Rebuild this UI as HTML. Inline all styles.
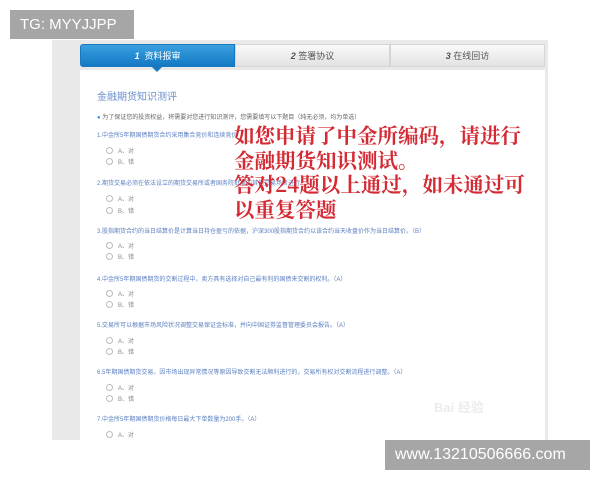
<!DOCTYPE html>
<html><head><meta charset="utf-8"><style>
*{margin:0;padding:0;box-sizing:border-box}
body{width:600px;height:480px;background:#fff;position:relative;overflow:hidden;font-family:"Liberation Sans","Noto Sans CJK SC",sans-serif}
.panel{position:absolute;left:52px;top:40px;width:496px;height:400px;background:#e9e9e9}
.white{position:absolute;left:80px;top:70px;width:465px;height:370px;background:#fff}
.tab{position:absolute;top:44px;height:23px;font-size:9px;line-height:23px;text-align:center;color:#555;background:linear-gradient(#fafafa,#e2e2e2);border:1px solid #d5d5d5}
.t1{left:80px;width:155px;background:linear-gradient(#3aa0e0,#1379c4);color:#fff;border-color:#1a78c0;border-radius:3px 0 0 3px}
.arrow{position:absolute;left:152px;top:67px;border:5px solid transparent;border-top-color:#1a78c0}
.t{position:absolute;left:97px;font-size:6px;color:#5b7fc0;white-space:nowrap}
.o{position:absolute;left:106px;font-size:6px;color:#888;white-space:nowrap}
.o:before{content:"";display:inline-block;width:5px;height:5px;border:1px solid #bbb;border-radius:50%;margin-right:5px;vertical-align:-1px}
.red{position:absolute;left:234px;top:122px;font-family:"Noto Serif CJK SC",serif;font-size:20.5px;line-height:24.5px;color:#d42a34;font-weight:bold;white-space:nowrap}
.lab{position:absolute;background:#a6a6a6;color:#fff;font-size:15px;line-height:29px;padding:0 10px}
</style></head><body>
<div class="lab" style="left:10px;top:10px;width:124px;height:29px">TG: MYYJJPP</div>
<div class="panel"></div>
<div class="white"></div>
<div class="tab t1"><i><b>1</b></i>&nbsp; 资料报审</div>
<div class="tab" style="left:235px;width:155px"><i><b>2</b></i> 签署协议</div>
<div class="tab" style="left:390px;width:155px"><i><b>3</b></i> 在线回访</div>
<div class="arrow"></div>
<div class="t" style="top:88px;font-size:10px;color:#6a8fcc">金融期货知识测评</div>
<div class="t" style="top:112px;color:#666"><span style="color:#3a8fd8">●</span> 为了保证您的投资权益，将需要对您进行知识测评，您需要填写以下题目（纯无必须，均为单选）</div>
<div class="t" style="top:130px">1.中金所5年期国债期货合约采用集合竞价和连续竞价</div>
<div class="o" style="top:146px">A、对</div><div class="o" style="top:157px">B、错</div>
<div class="t" style="top:178px">2.期货交易必须在依法设立的期货交易所或者国务院批准的其他交易场所进行</div>
<div class="o" style="top:194px">A、对</div><div class="o" style="top:206px">B、错</div>
<div class="t" style="top:226px">3.股指期货合约的当日结算价是计算当日持仓盈亏的依据，沪深300股指期货合约以该合约当天收盘价作为当日结算价。（B）</div>
<div class="o" style="top:241px">A、对</div><div class="o" style="top:252px">B、错</div>
<div class="t" style="top:274px">4.中金所5年期国债期货的交割过程中，卖方具有选择对自己最有利的国债来交割的权利。（A）</div>
<div class="o" style="top:289px">A、对</div><div class="o" style="top:300px">B、错</div>
<div class="t" style="top:320px">5.交易所可以根据市场风险状况调整交易保证金标准，并向中国证券监督管理委员会报告。（A）</div>
<div class="o" style="top:336px">A、对</div><div class="o" style="top:347px">B、错</div>
<div class="t" style="top:367px">6.5年期国债期货交易，因市场出现异常情况等原因导致交割无法顺利进行的，交易所有权对交割流程进行调整。（A）</div>
<div class="o" style="top:383px">A、对</div><div class="o" style="top:394px">B、错</div>
<div class="t" style="top:414px">7.中金所5年期国债期货价格每日最大下单数量为200手。（A）</div>
<div class="o" style="top:430px">A、对</div>
<div style="position:absolute;left:434px;top:397px;font-size:13px;color:#ececec;font-weight:bold">Bai 经验</div>
<div class="red">如您申请了中金所编码，请进行<br>金融期货知识测试。<br>答对24题以上通过，如未通过可<br>以重复答题</div>
<div class="lab" style="left:385px;top:440px;width:205px;height:30px;line-height:30px;font-size:16px">www.13210506666.com</div>
</body></html>
